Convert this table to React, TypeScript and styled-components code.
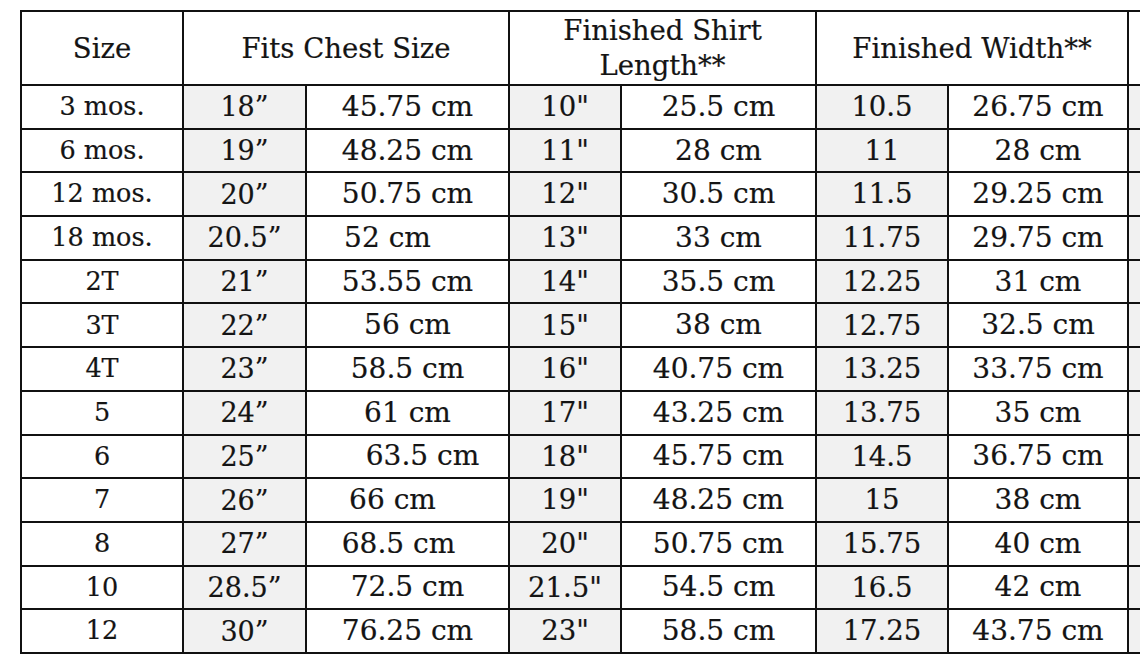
import styled, { createGlobalStyle } from 'styled-components';

const GlobalStyle = createGlobalStyle`
  html, body {
    margin: 0;
    padding: 0;
    background: #fff;
    overflow: hidden;
  }
  body {
    font-family: "DejaVu Serif", "Liberation Serif", serif;
    color: #141414;
  }
`;

const Page = styled.div`
  padding: 10px 0 0 20px;
  width: 1200px;
`;

const Table = styled.table`
  border-collapse: collapse;
  table-layout: fixed;
  width: 1167px;
`;

const HeadRow = styled.tr`
  height: 74px;
`;

const Row = styled.tr`
  height: 43.7px;
`;

const HeadCell = styled.th`
  border: 2px solid #111;
  font-weight: normal;
  font-size: 27.5px;
  line-height: 35px;
  text-align: center;
  vertical-align: middle;
  padding: 0 4px;
  background: #fff;
  -webkit-text-stroke: 0.2px #141414;
`;

type Kind = 'size' | 'chest' | 'inch' | 'cm';
type CellProps = { $kind: Kind; $shift?: number };

const sizes: Record<Kind, string> = {
  size: '25.5px',
  chest: '27px',
  inch: '27.5px',
  cm: '28px',
};

const Cell = styled.td<CellProps>`
  border: 2px solid #111;
  text-align: center;
  vertical-align: middle;
  padding: 0 2px;
  white-space: nowrap;
  line-height: 1;
  background: ${(p) => (p.$kind === 'chest' || p.$kind === 'inch' ? '#f1f1f1' : '#fff')};
  font-size: ${(p) => sizes[p.$kind]};
  -webkit-text-stroke: 0.2px #141414;
  span {
    display: inline-block;
    transform: translateX(${(p) => p.$shift ?? 0}px);
  }
`;

const widths = [162, 123, 203, 112, 195, 132, 180, 60];
const kinds: Kind[] = ['size', 'chest', 'cm', 'inch', 'cm', 'inch', 'cm', 'inch'];

const rows: string[][] = [
  ['3 mos.', '18”', '45.75 cm', '10"', '25.5 cm', '10.5', '26.75 cm'],
  ['6 mos.', '19”', '48.25 cm', '11"', '28 cm', '11', '28 cm'],
  ['12 mos.', '20”', '50.75 cm', '12"', '30.5 cm', '11.5', '29.25 cm'],
  ['18 mos.', '20.5”', '52 cm', '13"', '33 cm', '11.75', '29.75 cm'],
  ['2T', '21”', '53.55 cm', '14"', '35.5 cm', '12.25', '31 cm'],
  ['3T', '22”', '56 cm', '15"', '38 cm', '12.75', '32.5 cm'],
  ['4T', '23”', '58.5 cm', '16"', '40.75 cm', '13.25', '33.75 cm'],
  ['5', '24”', '61 cm', '17"', '43.25 cm', '13.75', '35 cm'],
  ['6', '25”', '63.5 cm', '18"', '45.75 cm', '14.5', '36.75 cm'],
  ['7', '26”', '66 cm', '19"', '48.25 cm', '15', '38 cm'],
  ['8', '27”', '68.5 cm', '20"', '50.75 cm', '15.75', '40 cm'],
  ['10', '28.5”', '72.5 cm', '21.5"', '54.5 cm', '16.5', '42 cm'],
  ['12', '30”', '76.25 cm', '23"', '58.5 cm', '17.25', '43.75 cm'],
];

// the source chart has a few cells that sit off-centre
const shifts: Record<string, number> = {
  '3-2': -20,
  '8-2': 15,
  '9-2': -15,
  '10-2': -9,
};

export default function App() {
  return (
    <>
      <GlobalStyle />
      <Page>
        <Table>
          <colgroup>
            {widths.map((w, i) => (
              <col key={i} style={{ width: w }} />
            ))}
          </colgroup>
          <thead>
            <HeadRow>
              <HeadCell>Size</HeadCell>
              <HeadCell colSpan={2}>Fits Chest Size</HeadCell>
              <HeadCell colSpan={2}>
                Finished Shirt
                <br />
                Length**
              </HeadCell>
              <HeadCell colSpan={2}>Finished Width**</HeadCell>
              <HeadCell />
            </HeadRow>
          </thead>
          <tbody>
            {rows.map((r, ri) => (
              <Row key={ri}>
                {[...r, ''].map((v, ci) => (
                  <Cell key={ci} $kind={kinds[ci]} $shift={shifts[`${ri}-${ci}`]}>
                    <span>{v}</span>
                  </Cell>
                ))}
              </Row>
            ))}
          </tbody>
        </Table>
      </Page>
    </>
  );
}
